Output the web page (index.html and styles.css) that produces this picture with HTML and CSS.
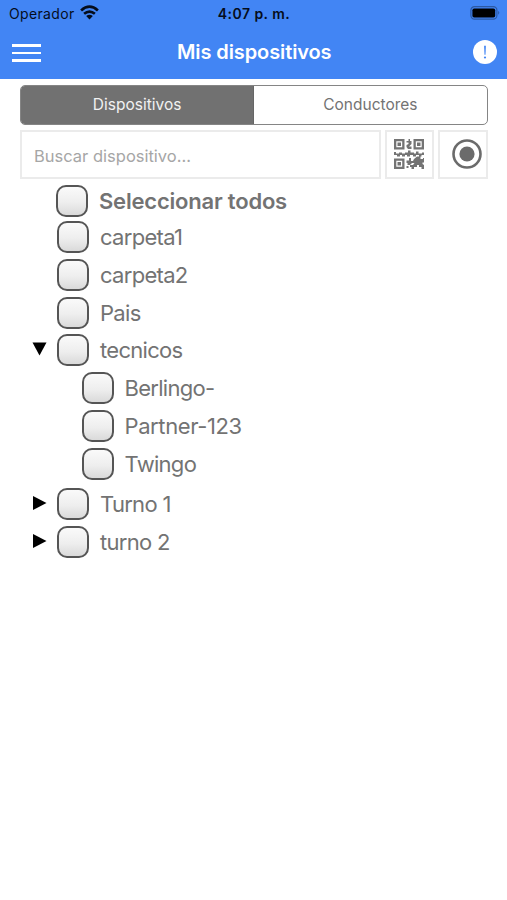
FILE: index.html
```html
<!DOCTYPE html>
<html lang="es">
<head>
<meta charset="utf-8">
<title>Mis dispositivos</title>
<link rel="stylesheet" href="styles.css">
</head>
<body>
<header class="header">
  <div class="status">
    <div class="carrier"><span class="carrier-name">Operador</span>
      <svg class="wifi" width="19" height="15" viewBox="0 0 19 15" fill="none" stroke="#050d1c" stroke-width="2.7"><path d="M1.1 5.4Q9.5-2 17.9 5.4M4.1 8.8Q9.5 4.3 14.9 8.8"/><path d="M6.2 11.1Q9.5 8.4 12.8 11.1L9.5 14.4Z" fill="#050d1c" stroke="none"/></svg>
    </div>
    <span class="clock">4:07 p. m.</span>
    <svg class="battery" width="30" height="14" viewBox="0 0 30 14"><rect x=".9" y=".7" width="26" height="12.5" rx="3.6" fill="none" stroke="#2c59a3" stroke-width="1.2"/><rect x="2.4" y="2.4" width="22.8" height="9.1" rx="1.8" fill="#000"/><path d="M28.2 4.8q2.2 2 0 4z" fill="#2c59a3"/></svg>
  </div>
  <div class="nav">
    <div class="menu"><i></i><i></i><i></i></div>
    <h1 class="title">Mis dispositivos</h1>
    <svg class="alert" width="24" height="24" viewBox="0 0 24 24"><circle cx="12" cy="12" r="12" fill="#fff"/><path d="M11.1 5.7h1.8l-.4 9h-1z" fill="#4285f4"/><circle cx="12" cy="17.5" r="1.1" fill="#4285f4"/></svg>
  </div>
</header>
<main class="content">
  <div class="tabs">
    <div class="tab active"><span>Dispositivos</span></div>
    <div class="tab"><span>Conductores</span></div>
  </div>
  <div class="search">
    <div class="field"><span>Buscar dispositivo...</span></div>
    <div class="button">
      <svg width="30" height="30" viewBox="0 0 30 30" fill="#747474"><path fill-rule="evenodd" d="M0 0h10.5v10.500H0zM2.300 2.300v5.900h5.900V2.300zM19.500 0H30v10.500H19.500zM21.800 2.300v5.900h5.900V2.300zM0 19.500h10.500V30H0zM2.300 21.800v5.900h5.900v-5.900z"/><path d="M3.500 3.500H7V7H3.500zM23 3.500h3.500V7H23zM3.500 23H7v3.500H3.500z"/><path d="M14.500 0H16v2h1.500v3L15 7.500h2.500V10H14l-1.500-2V6l2-1V3.500h-2V2h2zM0 13h2v1.500h3V13.500h3v1h3v-1h3V11.500h2.500V13.500H20v1h2v-2h2.500v2H28v-1h2V16h-2.500v1.500H25V16h-3v1.500h-3V16h-3v1.500h-3V16h-2v1.500H8V16H6v1.500H3V16H0zM20 20l3-2.500h3.500V20H29v-1h1v4.500h-1.500V25l1.500 1v4h-2.500v-2H25v-2h-2v2h-3v2h-2.500v-2H16v-2h3l1.500-2H18l-2 2h-2.500v-2h-1v-2.500H15V19h2v3h2zM12.500 27h2v2h-2z"/></svg>
    </div>
    <div class="button target">
      <svg width="30" height="30" viewBox="0 0 30 30"><circle cx="15" cy="15" r="13.5" fill="none" stroke="#6b6b6b" stroke-width="2.6"/><circle cx="15" cy="15" r="7.6" fill="#6b6b6b"/></svg>
    </div>
  </div>
  <div class="tree">
    <div class="row all"><span class="arrow"></span><span class="box"></span><span class="label">Seleccionar todos</span></div>
    <div class="row"><span class="arrow"></span><span class="box"></span><span class="label">carpeta1</span></div>
    <div class="row"><span class="arrow"></span><span class="box"></span><span class="label">carpeta2</span></div>
    <div class="row"><span class="arrow"></span><span class="box"></span><span class="label">Pais</span></div>
    <div class="row"><span class="arrow"><svg width="15" height="14" viewBox="0 0 15 14"><path d="M.5.5h14L7.5 13.5z"/></svg></span><span class="box"></span><span class="label">tecnicos</span></div>
    <div class="children">
      <div class="row"><span class="arrow"></span><span class="box"></span><span class="label">Berlingo-</span></div>
      <div class="row"><span class="arrow"></span><span class="box"></span><span class="label long">Partner-123</span></div>
      <div class="row"><span class="arrow"></span><span class="box"></span><span class="label">Twingo</span></div>
    </div>
    <div class="row"><span class="arrow"><svg width="15" height="14" viewBox="0 0 15 14"><path d="M1 0v14L14.5 7z"/></svg></span><span class="box"></span><span class="label">Turno 1</span></div>
    <div class="row"><span class="arrow"><svg width="15" height="14" viewBox="0 0 15 14"><path d="M1 0v14L14.5 7z"/></svg></span><span class="box"></span><span class="label">turno 2</span></div>
  </div>
</main>
</body>
</html>
```
FILE: styles.css
```css
* { box-sizing: border-box; }
body { margin: 0; min-height: 900px; background: #fff; color: #737373; font-family: Inter, "Liberation Sans", sans-serif; }
.header { height: 79px; background: #4285f4; }
.status { display: grid; grid-template-columns: 1fr auto 1fr; align-items: center; height: 27px; padding: 0 7px 0 9px; color: #050d1c; font-size: 14px; }
.carrier { display: flex; align-items: center; gap: 5px; }
.carrier-name { letter-spacing: .35px; }
.wifi { margin-top: -2px; }
.clock { margin-left: -1px; font-weight: 600; letter-spacing: .45px; }
.battery { justify-self: end; margin-top: -1px; }
.nav { display: grid; grid-template-columns: 1fr auto 1fr; align-items: center; height: 50px; padding: 0 10.5px 0 12px; }
.menu { display: flex; flex-direction: column; gap: 5px; width: 29px; margin-top: 2px; }
.menu i { height: 2.4px; background: #fff; }
.title { margin: 0; color: #fff; font-size: 20px; font-weight: 600; letter-spacing: -.1px; }
.alert { justify-self: end; }
.content { padding: 6px 19.5px 0 20px; }
.tabs { display: flex; height: 39.5px; border: 1.5px solid #858585; border-radius: 5px; overflow: hidden; }
.tab { flex: 1; display: flex; align-items: center; justify-content: center; font-size: 15.5px; }
.active { background: #717171; color: #f2f2f2; border-right: 1px solid #666; }
.search { display: flex; gap: 4px; height: 49px; margin-top: 5.5px; }
.field { flex: 1; display: flex; align-items: center; padding: 3px 0 0 12px; border: 2px solid #ebebeb; color: #a6a6a6; font-size: 16.5px; }
.button { display: flex; align-items: center; justify-content: center; width: 49.5px; border: 2px solid #ebebeb; }
.button svg { margin-top: -2px; }
.target { padding-left: 9px; }
.tree { padding: 4px 0 0 11px; }
.row { display: flex; align-items: center; height: 37.85px; }
.arrow { display: flex; width: 15px; height: 14px; margin: -2px 10px 0 1px; }
.box { width: 32px; height: 32px; border: 2px solid #555; border-radius: 10px; background: linear-gradient(#fafafa, #eee 55%, #dadada); }
.label { margin-left: 11px; font-size: 22px; white-space: nowrap; letter-spacing: -.7px; }
.long { letter-spacing: -.4px; }
.all { height: 35px; margin-left: -1px; font-weight: 600; }
.all .label { letter-spacing: -.2px; }
.children { margin-left: 24.5px; padding-bottom: 2px; }
```
